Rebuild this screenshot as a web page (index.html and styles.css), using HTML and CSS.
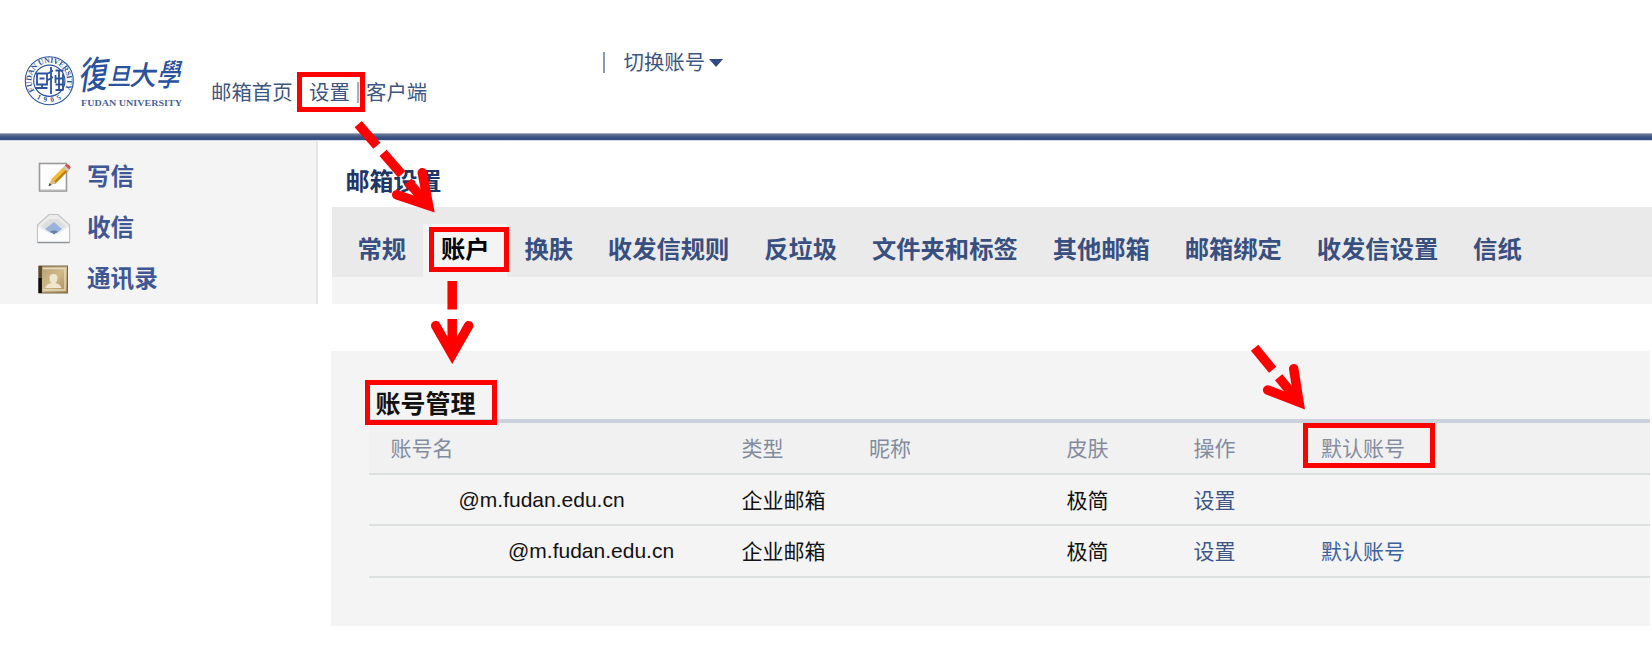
FILE: index.html
```html
<!DOCTYPE html>
<html lang="zh-CN">
<head>
<meta charset="utf-8">
<title>邮箱设置</title>
<link rel="stylesheet" href="styles.css">
</head>
<body>
<div class="page">
  <header class="header">
    <svg class="logo" width="166" height="64" viewBox="0 0 166 64">
      <defs>
        <path id="ring" d="M14.500 44.500 A17.800 17.800 0 1 1 44.100 44.500"/>
        <path id="ringlow" d="M13 48.500 A21.800 21.800 0 0 0 46 48.500"/>
      </defs>
      <g fill="none" stroke="#2b529c">
        <circle cx="29.3" cy="34.7" r="24" stroke-width="1.1"/>
        <circle cx="29.3" cy="34.7" r="15.600" stroke-width="1.200"/>
      </g>
      <g class="seal-text">
        <text font-size="7.800" textLength="75" lengthAdjust="spacing"><textPath href="#ring">FUDAN UNIVERSITY</textPath></text>
        <text font-size="7" letter-spacing="4"><textPath href="#ringlow" startOffset="5">1905</textPath></text>
      </g>
      <g fill="none" stroke="#2b529c" stroke-width="1.800">
        <path d="M17 27.500h10v11h-10zM19.500 32.500h5M15.500 42h12M22 38.500v4M31 21v27M28 27.500l5-3M28 34l5-3M35.500 24.500h8M35.500 29v8M39 24.500v20M43 28v16M35.500 32.500h8M35.500 38.500h8M35.500 44h8"/>
      </g>
      <g class="calligraphy">
        <text transform="translate(58 43.500) rotate(-5) skewX(-14)" font-size="37" textLength="29" lengthAdjust="spacingAndGlyphs">復</text>
        <text transform="translate(87 39) skewX(-12)" font-size="24">旦</text>
        <text transform="translate(109 38.500) skewX(-10)" font-size="27">大</text>
        <text transform="translate(136 39.500) skewX(-14)" font-size="31" textLength="23" lengthAdjust="spacingAndGlyphs">學</text>
      </g>
      <text class="logo-en" x="61" y="59.500" textLength="101" lengthAdjust="spacingAndGlyphs">FUDAN UNIVERSITY</text>
    </svg>
    <nav class="topnav">
      <a class="nav-home">邮箱首页</a><a class="nav-set">设置</a><i class="bar"></i><a class="nav-client">客户端</a>
    </nav>
    <div class="switcher"><i class="bar"></i><span>切换账号</span><i class="caret"></i></div>
  </header>
  <div class="band"></div>
  <div class="body">
    <aside class="sidebar">
      <a class="side-item">
        <svg class="side-icon" width="36" height="36" viewBox="0 0 36 36">
          <rect x="4.500" y="4.500" width="27" height="27.500" fill="#fdfdfd" stroke="#9a9a9a" stroke-width="1.600"/>
          <path d="M5 31h26" stroke="#bbb"/>
          <path d="M14 26.500l3-7L30 6.500l4 4-13 13z" fill="#f2bb3a"/>
          <path d="M20 25l14-14-1.800-1.500-14 14z" fill="#bf7c13"/>
          <path d="M14 26.500l2.500-6.500 4.500 4z" fill="#d8bd85"/>
          <path d="M13.500 27.300l1-3.200 2.200 2z" fill="#444"/>
          <path d="M28 8.500l2-2 4 4-2 2z" fill="#c9c9c9"/>
          <path d="M30 6.500q2-2.500 4.500 0 2 2 0 4z" fill="#cf4f49"/>
        </svg>
        <span>写信</span>
      </a>
      <a class="side-item">
        <svg class="side-icon" width="36" height="36" viewBox="0 0 36 36">
          <path d="M2.500 15L14 4.500h9L34.500 15v17h-32z" fill="#ececec" stroke="#c0c4c8" stroke-width="1.200"/>
          <path d="M6 16L14 9h9l8 7-12 9z" fill="#dedede"/>
          <path d="M10 19l9-7 8 7-8 6z" fill="#9ab3dc"/>
          <path d="M3 17l12 7 4-2 4 2 11-7v15H3z" fill="#fcfcfc"/>
          <path d="M15 21.500q4-2 8 0l-4 3z" fill="#64809f"/>
          <path d="M2.500 32.500h32" stroke="#8d949b" stroke-width="1.600"/>
        </svg>
        <span>收信</span>
      </a>
      <a class="side-item">
        <svg class="side-icon" width="36" height="36" viewBox="0 0 36 36">
          <defs><linearGradient id="tan" x2="1" y2="1"><stop stop-color="#b39c72"/><stop offset=".5" stop-color="#cfb889"/><stop offset="1" stop-color="#a68a55"/></linearGradient></defs>
          <rect x="4" y="5" width="28.500" height="27" fill="url(#tan)" stroke="#7a6647" stroke-width="1"/>
          <path d="M3.500 5h3.500v27h-3.500z" fill="#5b4a33"/>
          <path d="M3.500 17h3.300v15h-3.300z" fill="#111"/>
          <path d="M8 7.500h22v21.500H8" fill="none" stroke="#e6dbbf" stroke-width="1.400"/>
          <path d="M10.500 27q1-4 6-5-2-2-2-5 0-4 4-4t4 4q0 3-2 5 5 1 6 5z" fill="#efe6cd"/>
        </svg>
        <span>通讯录</span>
      </a>
    </aside>
    <main class="main">
      <h1 class="title">邮箱设置</h1>
      <div class="tabs">
        <a class="tab">常规</a><a class="tab active">账户</a><a class="tab">换肤</a><a class="tab">收发信规则</a><a class="tab">反垃圾</a><a class="tab">文件夹和标签</a><a class="tab">其他邮箱</a><a class="tab">邮箱绑定</a><a class="tab">收发信设置</a><a class="tab">信纸</a>
      </div>
      <div class="tab-foot"></div>
    </main>
  </div>
  <section class="panel">
    <h2 class="panel-title">账号管理</h2>
    <div class="table">
      <div class="row labels"><span>账号名</span><span>类型</span><span>昵称</span><span>皮肤</span><span>操作</span><span>默认账号</span></div>
      <div class="row"><span class="mail first">@m.fudan.edu.cn</span><span>企业邮箱</span><span></span><span>极简</span><a class="link">设置</a><span></span></div>
      <div class="row"><span class="mail second">@m.fudan.edu.cn</span><span>企业邮箱</span><span></span><span>极简</span><a class="link">设置</a><a class="link bright">默认账号</a></div>
    </div>
  </section>
  <svg class="marks" width="1652" height="666" viewBox="0 0 1652 666">
    <rect x="299.500" y="74.500" width="63" height="35"/>
    <rect x="431.500" y="229.500" width="75" height="40"/>
    <rect x="367.500" y="382.500" width="127" height="40"/>
    <rect x="1305.500" y="425.500" width="127" height="40"/>
    <path class="dash" d="M358.200 124.200L428.500 205.400"/>
    <path class="head" d="M422.300 172.700L428.500 205.400L396.700 194.700"/>
    <path class="dash" d="M452.200 281V354.500"/>
    <path class="head" d="M435.700 325.700L452.200 354.500L468.700 325.700"/>
    <path class="dash" d="M1254.600 347.800L1299 402.100"/>
    <path class="head" d="M1293.700 368.700L1299 402.100L1267.700 390"/>
  </svg>
</div>
</body>
</html>
```
FILE: styles.css
```css
* { box-sizing: border-box; }
body {
  margin: 0;
  background: #fff;
  font-family: "Liberation Sans", "Noto Sans CJK SC", sans-serif;
  color: #111;
}
.page {
  position: relative;
  width: 1652px;
  height: 666px;
  overflow: hidden;
}
.header {
  display: flex;
  height: 133px;
  color: #3d5682;
  font-size: 20.4px;
  line-height: 30px;
}
.logo { margin: 46px 0 0 20px; flex: none; overflow: visible; }
.seal-text { fill: #2b529c; font-family: "Liberation Serif", serif; font-weight: bold; }
.calligraphy { fill: #2b529c; font-family: "Noto Sans CJK TC", sans-serif; font-weight: 500; }
.logo-en { fill: #4d649c; font: bold 8.5px "Liberation Serif", serif; }
.topnav {
  display: flex;
  width: 417px;
  margin-top: 78px;
  padding-left: 25px;
}
.nav-home { width: 98px; }
.nav-set { width: 48px; }
.bar { width: 1.500px; height: 21px; margin-top: 4px; background: #a5afc2; }
.nav-client { margin-left: 7.500px; }
.switcher { display: flex; margin-top: 48px; }
.switcher .bar { background: #8d9ab3; }
.switcher span { margin-left: 19px; }
.caret {
  width: 14px;
  height: 8px;
  margin: 11px 0 0 4px;
  background: #2f4c80;
  clip-path: polygon(0 0, 100% 0, 50% 100%);
}
.band {
  height: 8px;
  background: linear-gradient(#a4adbf 0 1px, #6c7c9c 1px, #3b5480 4px, #2f5084 7px, #d5dbe8 7px);
}
.body { display: flex; height: 163px; }
.sidebar {
  width: 318px;
  padding: 10px 0 0 35px;
  background: #f4f4f4;
  border-right: 2px solid #e6e6e6;
  color: #3f5795;
  font-size: 23.600px;
  font-weight: 700;
}
.side-item { display: flex; align-items: center; height: 51.300px; gap: 16px; line-height: 50px; }
.main { flex: 1; padding-left: 14px; }
.title {
  height: 66px;
  margin: 0;
  padding: 23px 0 0 13.500px;
  color: #1f3766;
  font-size: 24px;
  font-weight: 700;
  line-height: 36px;
}
.tabs {
  display: flex;
  height: 70px;
  padding: 17px 0 0 8px;
  background: #eaeaea;
}
.tab {
  padding: 1px 17.450px 0;
  color: #384f7f;
  font-size: 24.300px;
  font-weight: 700;
  line-height: 50px;
  white-space: nowrap;
}
.tab.active { background: #f4f4f4; color: #000; }
.tab-foot { height: 27px; background: #f4f4f4; }
.panel {
  width: 1319px;
  height: 275px;
  margin: 47px 0 0 331px;
  padding-left: 37.500px;
  background: #f4f4f4;
}
.panel-title {
  height: 68px;
  margin: 0;
  padding: 35px 0 0 7px;
  font-size: 25px;
  font-weight: 700;
  line-height: 36px;
}
.table { border-top: 4px solid #ccd2dc; font-size: 21px; }
.row {
  display: grid;
  grid-template-columns: 351px 127.500px 197.500px 127px 127.500px 1fr;
  height: 51.300px;
  padding: 1px 0 0 22px;
  border-bottom: 2px solid #dde0e0;
  line-height: 50px;
}
.row.labels { height: 52px; background: #f1f1f1; color: #838b9f; }
.link { color: #3d5685; }
.bright { color: #3b62a0; }
.mail { margin-top: -1px; font-size: 21px; }
.first { padding-left: 68px; }
.second { padding-left: 117.500px; }
.marks {
  position: absolute;
  inset: 0;
  fill: none;
  stroke: #f00;
}
.marks rect { stroke-width: 5px; }
.marks path { stroke-width: 9.500px; }
.dash { stroke-dasharray: 28.500 9.500; }
.head { stroke-linecap: round; stroke-linejoin: miter; }
```
